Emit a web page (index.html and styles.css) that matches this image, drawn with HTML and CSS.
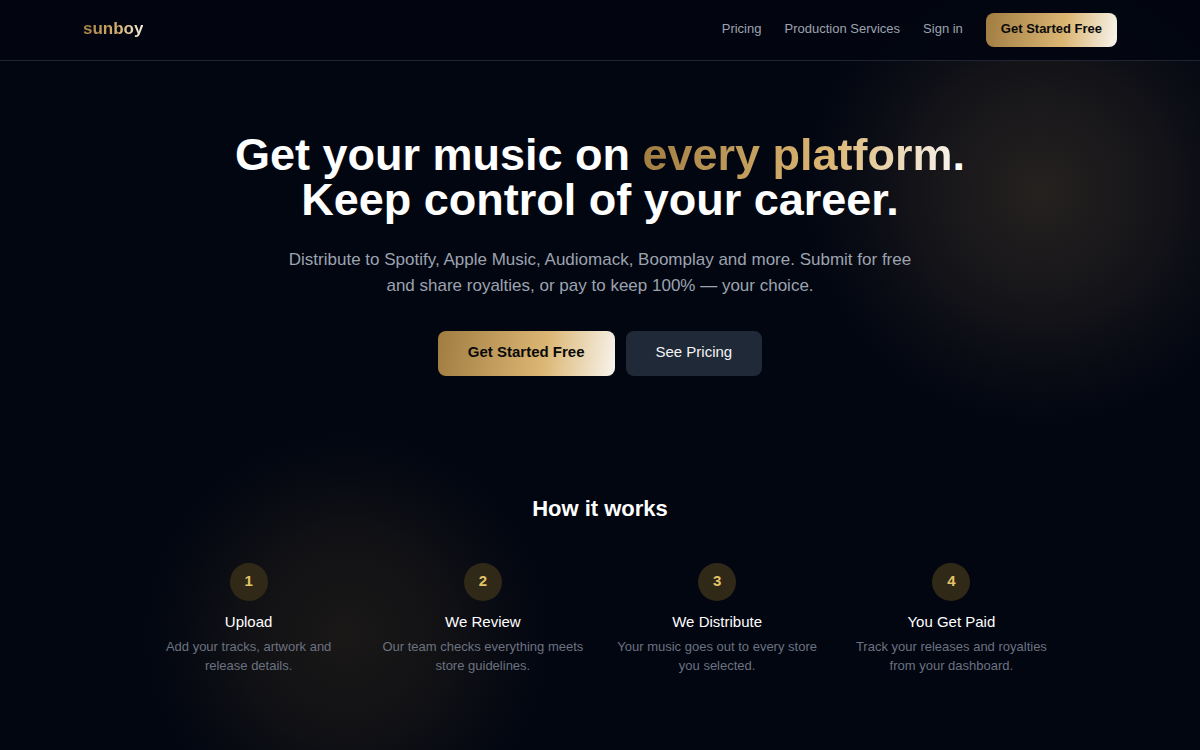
FILE: index.html
```html
<!DOCTYPE html>
<html lang="en">
<head>
  <meta charset="utf-8">
  <meta name="viewport" content="width=device-width, initial-scale=1">
  <title>sunboy</title>
  <link rel="stylesheet" href="styles.css">
</head>
<body>
  <header class="site-header">
    <div class="header-inner">
      <a class="logo gold-text" href="#">sunboy</a>
      <nav class="nav">
        <a class="nav-link" href="#pricing">Pricing</a>
        <a class="nav-link" href="#services">Production Services</a>
        <a class="nav-link" href="#signin">Sign in</a>
        <a class="button button-gold button-small" href="#signup">Get Started Free</a>
      </nav>
    </div>
  </header>
  <main>
    <section class="hero">
      <h1 class="hero-title">Get your music on <span class="gold-text">every platform</span>.<br>Keep control of your career.</h1>
      <p class="hero-text">Distribute to Spotify, Apple Music, Audiomack, Boomplay and more. Submit for free and share royalties, or pay to keep 100% — your choice.</p>
      <div class="hero-actions">
        <a class="button button-gold" href="#signup">Get Started Free</a>
        <a class="button button-dark" href="#pricing">See Pricing</a>
      </div>
    </section>
    <section class="how">
      <h2 class="how-title">How it works</h2>
      <ol class="steps">
        <li class="step">
          <span class="step-number">1</span>
          <h3 class="step-title">Upload</h3>
          <p class="step-text">Add your tracks, artwork and release details.</p>
        </li>
        <li class="step">
          <span class="step-number">2</span>
          <h3 class="step-title">We Review</h3>
          <p class="step-text">Our team checks everything meets store guidelines.</p>
        </li>
        <li class="step">
          <span class="step-number">3</span>
          <h3 class="step-title">We Distribute</h3>
          <p class="step-text">Your music goes out to every store you selected.</p>
        </li>
        <li class="step">
          <span class="step-number">4</span>
          <h3 class="step-title">You Get Paid</h3>
          <p class="step-text">Track your releases and royalties from your dashboard.</p>
        </li>
      </ol>
    </section>
  </main>
</body>
</html>
```
FILE: styles.css
```css
* {
  box-sizing: border-box;
  margin: 0;
  padding: 0;
}

body {
  min-height: 100vh;
  font-family: "Liberation Sans", Arial, sans-serif;
  font-size: 15px;
  line-height: 22px;
  color: #fff;
  background-color: #020611;
  background-image:
    radial-gradient(circle 240px at calc(100% - 160px) 190px, #25211f 0%, rgba(36, 32, 31, 0.55) 50%, rgba(36, 32, 32, 0.2) 78%, rgba(36, 32, 32, 0) 100%),
    radial-gradient(circle 210px at 347px 635px, #1a1817 0%, rgba(26, 24, 23, 0.6) 50%, rgba(26, 24, 23, 0.2) 78%, rgba(26, 24, 23, 0) 100%);
  background-repeat: no-repeat;
}

a {
  color: inherit;
  text-decoration: none;
}

.site-header {
  border-bottom: 1px solid #1f2430;
  background: rgba(2, 6, 17, 0.9);
}

.header-inner {
  display: flex;
  align-items: center;
  justify-content: space-between;
  max-width: 1080px;
  margin: 0 auto;
  padding: 13px 23px;
}

.gold-text {
  color: transparent;
  background: linear-gradient(100deg, #a07c42 0%, #dbb673 60%, #f8f4ee 100%);
  background-clip: text;
  -webkit-background-clip: text;
}

.logo {
  font-size: 17px;
  line-height: 26px;
  padding-bottom: 2px;
  font-weight: 700;
}

.nav {
  display: flex;
  align-items: center;
  gap: 23px;
  font-size: 13px;
}

.nav-link {
  padding-bottom: 2px;
  color: #9ca3af;
}

.button {
  padding: 10px 30px 13px;
  border-radius: 8px;
}

.button-gold {
  font-weight: 700;
  color: #0a0a0a;
  background: linear-gradient(100deg, #a07c42 0%, #dbb673 60%, #f8f4ee 100%);
}

.button-dark {
  color: #f3f4f6;
  background: #1f2937;
}

.button-small {
  padding: 5px 15px 7px;
}

.hero {
  max-width: 840px;
  margin: 0 auto;
  padding: 71px 23px 75px;
  text-align: center;
}

.hero-title {
  font-size: 45px;
  line-height: 45px;
}

.hero-text {
  max-width: 630px;
  margin: 25px auto 0;
  font-size: 17px;
  line-height: 26px;
  color: #9ca3af;
}

.hero-actions {
  display: flex;
  justify-content: center;
  gap: 11px;
  margin-top: 32px;
}

.how {
  max-width: 953px;
  margin: 0 auto;
  padding: 43px 23px 75px;
  text-align: center;
}

.how-title {
  font-size: 22px;
  line-height: 30px;
}

.steps {
  display: grid;
  grid-template-columns: repeat(4, 1fr);
  gap: 30px;
  margin-top: 39px;
  list-style: none;
}

.step {
  display: flex;
  flex-direction: column;
  align-items: center;
}

.step-number {
  width: 38px;
  height: 38px;
  padding-top: 7px;
  border-radius: 50%;
  font-weight: 700;
  color: #e3c268;
  background: #312918;
}

.step-title {
  margin-top: 10px;
  font-size: 15px;
  font-weight: 400;
}

.step-text {
  margin-top: 4px;
  font-size: 13px;
  line-height: 19px;
  color: #6b7280;
}
```
